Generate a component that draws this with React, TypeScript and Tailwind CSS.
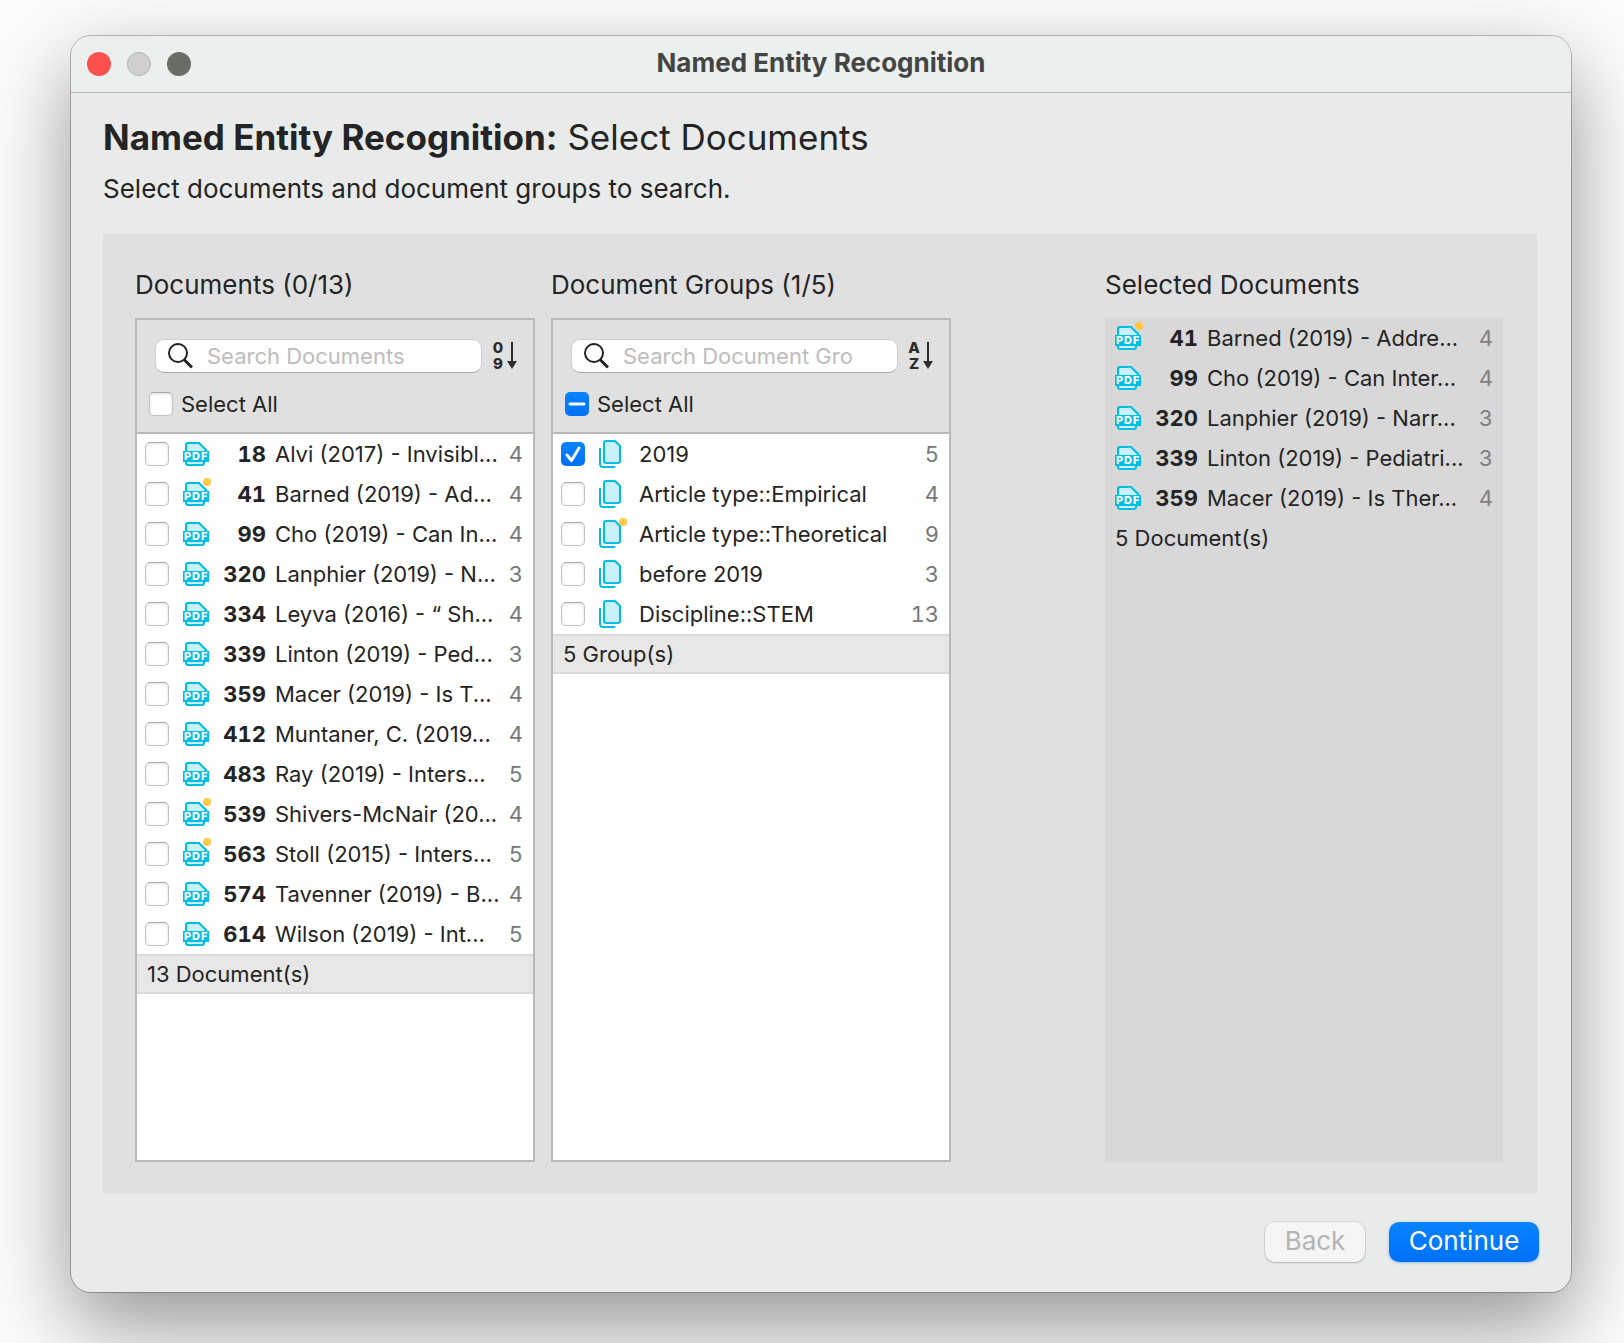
import { useState } from "react";

const DOCUMENTS = [
  { id: 18, title: "Alvi (2017) - Invisibl...", count: 4 },
  { id: 41, title: "Barned (2019) - Ad...", count: 4, memo: true },
  { id: 99, title: "Cho (2019) - Can In...", count: 4 },
  { id: 320, title: "Lanphier (2019) - N...", count: 3 },
  { id: 334, title: "Leyva (2016) - “ Sh...", count: 4 },
  { id: 339, title: "Linton (2019) - Ped...", count: 3 },
  { id: 359, title: "Macer (2019) - Is T...", count: 4 },
  { id: 412, title: "Muntaner, C. (2019...", count: 4 },
  { id: 483, title: "Ray (2019) - Inters...", count: 5 },
  { id: 539, title: "Shivers-McNair (20...", count: 4, memo: true },
  { id: 563, title: "Stoll (2015) - Inters...", count: 5, memo: true },
  { id: 574, title: "Tavenner (2019) - B...", count: 4 },
  { id: 614, title: "Wilson (2019) - Int...", count: 5 },
];

const GROUPS = [
  { name: "2019", count: 5 },
  { name: "Article type::Empirical", count: 4 },
  { name: "Article type::Theoretical", count: 9, memo: true },
  { name: "before 2019", count: 3 },
  { name: "Discipline::STEM", count: 13 },
];

const SELECTED = [
  { id: 41, title: "Barned (2019) - Addre...", count: 4, memo: true },
  { id: 99, title: "Cho (2019) - Can Inter...", count: 4 },
  { id: 320, title: "Lanphier (2019) - Narr...", count: 3 },
  { id: 339, title: "Linton (2019) - Pediatri...", count: 3 },
  { id: 359, title: "Macer (2019) - Is Ther...", count: 4 },
];

function PdfIcon({ memo }: { memo?: boolean }) {
  return (
    <svg width="28" height="32" viewBox="0 0 28 32" className="shrink-0 overflow-visible" aria-hidden="true">
      <path d="M3 15V7q0-2 2-2h11l7 7v3z" fill="#c9f0f8" stroke="#00bde3" strokeWidth="2" />
      <path d="M3 23v2q0 2 2 2h14q2 0 2-2v-2" fill="#c9f0f8" stroke="#00bde3" strokeWidth="2" />
      <rect x="0" y="13" width="26" height="11" fill="#00bde3" />
      <g fontSize="11" fontWeight="800" fill="#fff" fontFamily="Inter, sans-serif">
        <text x="1" y="22">P</text>
        <text x="9" y="22">D</text>
        <text x="18" y="22">F</text>
      </g>
      {memo && <circle cx="24" cy="4" r="4" fill="#ffc844" />}
    </svg>
  );
}

function GroupIcon({ memo }: { memo?: boolean }) {
  return (
    <svg width="28" height="28" viewBox="0 0 28 28" className="shrink-0 overflow-visible" aria-hidden="true">
      <path d="M5 3q0-2 2-2h9l5 5v15q0 2-2 2H7q-2 0-2-2z" fill="#c9f0f8" stroke="#00bde3" strokeWidth="2" />
      <path d="M1 8v16q0 3 3 3h12" fill="none" stroke="#00bde3" strokeWidth="2" />
      {memo && <circle cx="24" cy="2" r="4" fill="#ffc844" />}
    </svg>
  );
}

function SearchIcon() {
  return (
    <svg width="26" height="26" viewBox="0 0 26 26" fill="none" stroke="#222" className="pointer-events-none absolute left-3 top-1" aria-hidden="true">
      <circle cx="11" cy="10" r="9" strokeWidth="2" />
      <path d="M17 16.500l8 8" strokeWidth="3" />
    </svg>
  );
}

function SortIcon({ top, bottom }: { top: string; bottom: string }) {
  return (
    <svg width="26" height="30" viewBox="0 0 26 30" fill="#2b2b2b" className="overflow-visible" aria-hidden="true">
      <g fontFamily="Inter, sans-serif" fontSize="15" fontWeight="800" textAnchor="middle">
        <text x="6" y="12">{top}</text>
        <text x="6" y="28">{bottom}</text>
      </g>
      <path d="M19 1h2v19h4l-5 8l-5-8h4z" />
    </svg>
  );
}

type CheckboxProps = {
  id: string;
  checked: boolean;
  mixed?: boolean;
  onChange: () => void;
};

function Checkbox({ id, checked, mixed, onChange }: CheckboxProps) {
  return (
    <span className="relative block size-6 shrink-0">
      <input
        id={id}
        type="checkbox"
        checked={checked}
        ref={(el) => {
          if (el) el.indeterminate = !!mixed;
        }}
        onChange={onChange}
        className="block size-6 appearance-none rounded-[5px] border border-[#c2c2c2] border-t-[#a9a9a9] bg-white shadow-[inset_0_1px_3px_rgba(0,0,0,0.12)] checked:border-0 checked:bg-linear-to-b checked:from-[#0a84ff] checked:to-[#0070f5] checked:shadow-none indeterminate:border-0 indeterminate:bg-linear-to-b indeterminate:from-[#0a84ff] indeterminate:to-[#0070f5] indeterminate:shadow-none"
      />
      {(checked || mixed) && (
        <svg viewBox="0 0 24 24" className="pointer-events-none absolute inset-0 size-6" fill="none" stroke="#fff" strokeWidth="3" strokeLinecap="round" strokeLinejoin="round" aria-hidden="true">
          <path d={mixed ? "M5 12h14" : "M6 13l4.500 5.500L18 6"} />
        </svg>
      )}
    </span>
  );
}

type ListHeaderProps = {
  id: string;
  placeholder: string;
  sort: [string, string];
  mixed: boolean;
  checked: boolean;
  onToggle: () => void;
};

function ListHeader({ id, placeholder, sort, mixed, checked, onToggle }: ListHeaderProps) {
  return (
    <div className="border-b-2 border-[#b9b9b9] bg-[#e0e0e0] pt-[19px] pr-[15px] pb-4 pl-3">
      <div className="flex items-center gap-[10px] pl-[6px]">
        <div className="relative min-w-0 flex-1">
          <SearchIcon />
          <input
            type="text"
            aria-label={placeholder}
            placeholder={placeholder}
            className="block h-[34px] w-full rounded-[9px] border border-[#cfcfcf] border-b-[#a8a8a8] bg-white pr-10 pl-[51px] text-[22px] placeholder:text-[#bdbdbd] focus:outline-none"
          />
        </div>
        <button type="button" aria-label="Change sort order">
          <SortIcon top={sort[0]} bottom={sort[1]} />
        </button>
      </div>
      <div className="mt-[19px] flex items-center gap-2">
        <Checkbox id={id} checked={checked} mixed={mixed} onChange={onToggle} />
        <label htmlFor={id} className="leading-6">Select All</label>
      </div>
    </div>
  );
}

function ListFooter({ text }: { text: string }) {
  return <div className="h-10 border-y-2 border-[#d8d8d8] bg-[#e7e7e7] px-[10px] leading-9">{text}</div>;
}

export default function App() {
  const [docs, setDocs] = useState<number[]>([]);
  const [groups, setGroups] = useState<string[]>(["2019"]);

  const toggleDoc = (id: number) => {
    setDocs(docs.includes(id) ? docs.filter((d) => d !== id) : [...docs, id]);
  };

  const toggleGroup = (name: string) => {
    setGroups(groups.includes(name) ? groups.filter((g) => g !== name) : [...groups, name]);
  };

  const allDocs = docs.length === DOCUMENTS.length;
  const allGroups = groups.length === GROUPS.length;

  return (
    <div className="flex min-h-screen flex-col overflow-hidden bg-[#fcfcfc] pt-9 pr-[53px] pb-[51px] pl-[71px] font-['Inter',sans-serif] text-[22px] text-[#242424]">
      <main className="flex flex-1 flex-col rounded-[20px] bg-[#e9ebea] shadow-[0_0_0_1px_rgba(0,0,0,0.25),0_32px_84px_rgba(0,0,0,0.42)]">
        <header className="grid h-[57px] shrink-0 grid-cols-[1fr_auto_1fr] items-center rounded-t-[20px] border-b border-[#b5b7b6] bg-[#ebefed] px-4">
          <div className="flex gap-4">
            <button type="button" aria-label="Close" className="size-6 rounded-full bg-[#ff5050]" />
            <button type="button" aria-label="Minimize" className="size-6 rounded-full border border-[#b0b0b0] bg-[#cfcfcf]" />
            <button type="button" aria-label="Zoom" className="size-6 rounded-full bg-[#666e67]" />
          </div>
          <div className="pb-0.5 text-[26px] leading-8 font-bold text-[#434544]">Named Entity Recognition</div>
        </header>

        <div className="flex flex-1 flex-col px-8 pt-6 pb-[30px]">
          <h1 className="text-[35px] leading-10">
            <b>Named Entity Recognition:</b> Select Documents
          </h1>
          <p className="mt-4 text-[26px] leading-8">Select documents and document groups to search.</p>

          <div className="mt-[29px] mr-0.5 grid flex-1 grid-cols-[1fr_1fr_122px_1fr] gap-x-4 bg-[#e0e0e0] px-8 pt-[35px] pb-8">
            <section className="flex min-w-0 flex-col">
              <h2 className="mb-[17px] text-[26px] leading-8">Documents ({docs.length}/13)</h2>
              <div className="flex-1 border-2 border-[#b9b9b9] bg-white">
                <ListHeader
                  id="all-docs"
                  placeholder="Search Documents"
                  sort={["0", "9"]}
                  checked={allDocs}
                  mixed={docs.length > 0 && !allDocs}
                  onToggle={() => setDocs(allDocs ? [] : DOCUMENTS.map((d) => d.id))}
                />
                <ul>
                  {DOCUMENTS.map((doc) => (
                    <li key={doc.id}>
                      <label className="flex h-10 items-center pr-[10px] pl-2">
                        <Checkbox id={`doc-${doc.id}`} checked={docs.includes(doc.id)} onChange={() => toggleDoc(doc.id)} />
                        <span className="ml-[14px] flex"><PdfIcon memo={doc.memo} /></span>
                        <b className="w-[55px] text-right font-bold tabular-nums">{doc.id}</b>
                        <span className="ml-[9px] flex-1 whitespace-nowrap">{doc.title}</span>
                        <span className="text-[#777] tabular-nums">{doc.count}</span>
                      </label>
                    </li>
                  ))}
                </ul>
                <ListFooter text="13 Document(s)" />
              </div>
            </section>

            <section className="flex min-w-0 flex-col">
              <h2 className="mb-[17px] text-[26px] leading-8">Document Groups ({groups.length}/5)</h2>
              <div className="flex-1 border-2 border-[#b9b9b9] bg-white">
                <ListHeader
                  id="all-groups"
                  placeholder="Search Document Gro"
                  sort={["A", "Z"]}
                  checked={allGroups}
                  mixed={groups.length > 0 && !allGroups}
                  onToggle={() => setGroups(allGroups ? [] : GROUPS.map((g) => g.name))}
                />
                <ul>
                  {GROUPS.map((group) => (
                    <li key={group.name}>
                      <label className="flex h-10 items-center pr-[10px] pl-2">
                        <Checkbox id={`group-${group.name}`} checked={groups.includes(group.name)} onChange={() => toggleGroup(group.name)} />
                        <span className="ml-[14px] flex"><GroupIcon memo={group.memo} /></span>
                        <span className="ml-3 flex-1 whitespace-nowrap">{group.name}</span>
                        <span className="text-[#777] tabular-nums">{group.count}</span>
                      </label>
                    </li>
                  ))}
                </ul>
                <ListFooter text="5 Group(s)" />
              </div>
            </section>

            <section className="col-start-4 flex min-w-0 flex-col">
              <h2 className="mb-[17px] text-[26px] leading-8">Selected Documents</h2>
              <div className="mr-0.5 flex-1 bg-[#d8d8d8]">
                <ul>
                  {SELECTED.map((doc) => (
                    <li key={doc.id} className="flex h-10 items-center px-[10px]">
                      <PdfIcon memo={doc.memo} />
                      <b className="w-[55px] text-right font-bold tabular-nums">{doc.id}</b>
                      <span className="ml-[9px] flex-1 whitespace-nowrap">{doc.title}</span>
                      <span className="text-[#808080] tabular-nums">{doc.count}</span>
                    </li>
                  ))}
                </ul>
                <div className="px-[10px] leading-10">5 Document(s)</div>
              </div>
            </section>
          </div>

          <footer className="mt-7 flex justify-end gap-6 text-[26px]">
            <button type="button" disabled className="h-10 w-[100px] rounded-[10px] bg-[#f5f5f5] pb-0.5 leading-8 text-[#b4b4b4] shadow-[0_0_0_1px_rgba(0,0,0,0.06),0_1px_2px_rgba(0,0,0,0.2)]">
              Back
            </button>
            <button type="button" className="h-10 w-[150px] rounded-[10px] bg-linear-to-b from-[#0a84ff] to-[#0070f8] pb-0.5 leading-8 text-white shadow-[0_1px_3px_rgba(0,112,248,0.35)]">
              Continue
            </button>
          </footer>
        </div>
      </main>
    </div>
  );
}
